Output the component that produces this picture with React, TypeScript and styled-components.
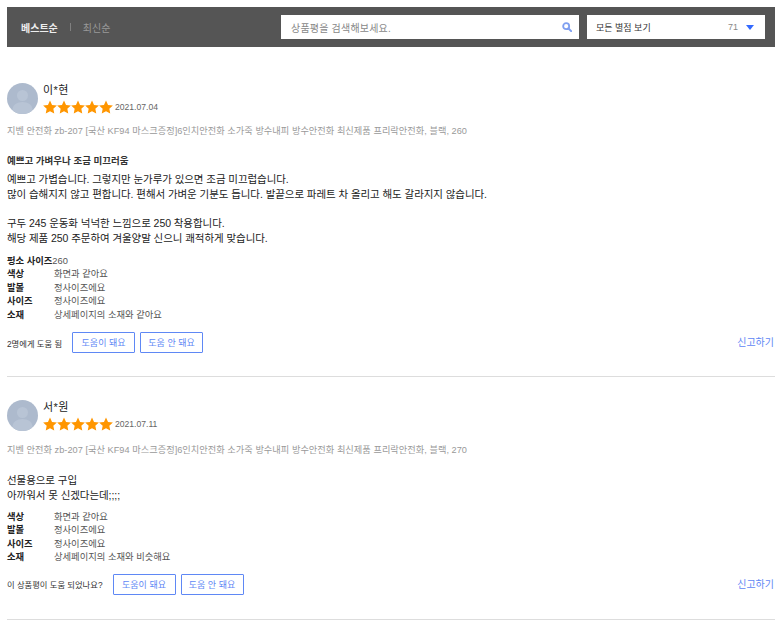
import * as React from "react";
import styled, { createGlobalStyle } from "styled-components";

const FONT = `"Liberation Sans", "Noto Sans CJK KR", sans-serif`;

type Attr = { label: string; value: string };

type Review = {
  name: string;
  date: string;
  product: string;
  title?: string;
  body: string[];
  size?: string;
  attrs: Attr[];
  helpful: string;
};

const PRODUCT = "지벤 안전화 zb-207 [국산 KF94 마스크증정]6인치안전화 소가죽 방수내피 방수안전화 최신제품 프리락안전화, 블랙, ";

const reviews: Review[] = [
  {
    name: "이*현",
    date: "2021.07.04",
    product: PRODUCT + "260",
    title: "예쁘고 가벼우나 조금 미끄러움",
    body: [
      "예쁘고 가볍습니다. 그렇지만 눈가루가 있으면 조금 미끄럽습니다.",
      "많이 습해지지 않고 편합니다. 편해서 가벼운 기분도 듭니다. 발끝으로 파레트 차 올리고 해도 갈라지지 않습니다.",
      "",
      "구두 245 운동화 넉넉한 느낌으로 250 착용합니다.",
      "해당 제품 250 주문하여 겨울양말 신으니 쾌적하게 맞습니다.",
    ],
    size: "260",
    attrs: [
      { label: "색상", value: "화면과 같아요" },
      { label: "발볼", value: "정사이즈에요" },
      { label: "사이즈", value: "정사이즈에요" },
      { label: "소재", value: "상세페이지의 소재와 같아요" },
    ],
    helpful: "2명에게 도움 됨",
  },
  {
    name: "서*원",
    date: "2021.07.11",
    product: PRODUCT + "270",
    body: ["선물용으로 구입", "아까워서 못 신겠다는데;;;;"],
    attrs: [
      { label: "색상", value: "화면과 같아요" },
      { label: "발볼", value: "정사이즈에요" },
      { label: "사이즈", value: "정사이즈에요" },
      { label: "소재", value: "상세페이지의 소재와 비슷해요" },
    ],
    helpful: "이 상품평이 도움 되었나요?",
  },
];

const Star: React.FC = () => (
  <svg width="14" height="14" viewBox="0 0 24 24">
    <path
      fill="#ff9600"
      d="M12 .8l3.5 7.6 8.3 1-6.1 5.7 1.6 8.2L12 19.2l-7.3 4.1 1.6-8.2L.2 9.4l8.3-1z"
    />
  </svg>
);

const ReviewItem: React.FC<{ review: Review }> = ({ review }) => (
  <ReviewBlock>
    <Author>
      <Avatar>
        <svg width="31" height="31" viewBox="0 0 31 31">
          <circle cx="15.5" cy="12.5" r="5.5" fill="#b8c4d5" />
          <ellipse cx="15.5" cy="26" rx="10" ry="7" fill="#b8c4d5" />
        </svg>
      </Avatar>
      <div>
        <Name>{review.name}</Name>
        <RatingRow>
          <Stars>
            {[0, 1, 2, 3, 4].map((i) => (
              <Star key={i} />
            ))}
          </Stars>
          <DateText>{review.date}</DateText>
        </RatingRow>
      </div>
    </Author>
    <Product $gap={review.title ? 12 : 14}>{review.product}</Product>
    <Content $gap={review.title ? 18 : 17}>
      {review.title && <Title>{review.title}</Title>}
      <Body>
        {review.body.map((line, i) => (
          <BodyLine key={i}>{line || "\u00a0"}</BodyLine>
        ))}
      </Body>
    </Content>
    <Attrs $gap={review.size ? 9 : 8}>
      {review.size && (
        <AttrRow>
          <SizeLabel>평소 사이즈</SizeLabel>
          <AttrValue>{review.size}</AttrValue>
        </AttrRow>
      )}
      {review.attrs.map((attr) => (
        <AttrRow key={attr.label}>
          <AttrLabel>{attr.label}</AttrLabel>
          <AttrValue>{attr.value}</AttrValue>
        </AttrRow>
      ))}
    </Attrs>
    <Actions $gap={review.size ? 10 : 9}>
      <HelpfulText>{review.helpful}</HelpfulText>
      <VoteButton>도움이 돼요</VoteButton>
      <VoteButton>도움 안 돼요</VoteButton>
      <Report>신고하기</Report>
    </Actions>
  </ReviewBlock>
);

export default function App() {
  return (
    <Page>
      <GlobalStyle />
      <Toolbar>
        <Sort>
          <SortItem $active>베스트순</SortItem>
          <SortDivider />
          <SortItem>최신순</SortItem>
        </Sort>
        <Search>
          <SearchText>상품평을 검색해보세요.</SearchText>
          <svg width="10" height="10" viewBox="0 0 12 12">
            <circle cx="5" cy="5" r="3.6" fill="none" stroke="#7f9ff0" strokeWidth="2.2" />
            <path d="M7.8 7.8L11 11" stroke="#7f9ff0" strokeWidth="2.4" strokeLinecap="round" />
          </svg>
        </Search>
        <Filter>
          <FilterText>모든 별점 보기</FilterText>
          <FilterCount>71</FilterCount>
          <Caret />
        </Filter>
      </Toolbar>
      {reviews.map((review) => (
        <ReviewItem key={review.name} review={review} />
      ))}
    </Page>
  );
}

const GlobalStyle = createGlobalStyle`
  html, body {
    margin: 0;
    padding: 0;
    background: #fff;
  }
  body {
    font-family: ${FONT};
    color: #222;
  }
`;

const Page = styled.div`
  width: 768px;
  height: 624px;
  padding: 7px 5px 0 7px;
  overflow: hidden;
`;

const Toolbar = styled.div`
  display: flex;
  align-items: center;
  height: 40px;
  padding: 0 10px 0 14px;
  background: #555;
  box-sizing: border-box;
`;

const Sort = styled.div`
  display: flex;
  align-items: center;
  width: 260px;
`;

const SortItem = styled.span<{ $active?: boolean }>`
  font-size: 10px;
  font-weight: ${(p) => (p.$active ? 700 : 400)};
  color: ${(p) => (p.$active ? "#eee" : "#999")};
`;

const SortDivider = styled.span`
  width: 1px;
  height: 8px;
  margin: 0 12px;
  background: #808080;
`;

const Search = styled.div`
  display: flex;
  align-items: center;
  justify-content: space-between;
  width: 298px;
  height: 24px;
  padding: 0 7px 0 10px;
  background: #fff;
  box-sizing: border-box;
`;

const SearchText = styled.span`
  font-size: 10px;
  letter-spacing: 0.2px;
  color: #888;
`;

const Filter = styled.div`
  display: flex;
  align-items: center;
  width: 178px;
  height: 24px;
  margin-left: 8px;
  padding: 0 11px 0 9px;
  background: #fff;
  box-sizing: border-box;
`;

const FilterText = styled.span`
  flex: 1;
  font-size: 9px;
  color: #333;
`;

const FilterCount = styled.span`
  font-size: 9px;
  color: #888;
`;

const Caret = styled.span`
  width: 0;
  height: 0;
  margin-left: 8px;
  border-left: 4px solid transparent;
  border-right: 4px solid transparent;
  border-top: 5px solid #346aff;
`;

const ReviewBlock = styled.section`
  padding-top: 36px;
  height: 330px;
  box-sizing: border-box;
  border-bottom: 1px solid #ddd;

  & + & {
    height: 243px;
    padding-top: 23px;
  }
`;

const Author = styled.div`
  display: flex;
  align-items: flex-start;
  gap: 5px;
`;

const Avatar = styled.div`
  width: 31px;
  height: 31px;
  border-radius: 50%;
  background: #adbacd;
  overflow: hidden;
`;

const Name = styled.div`
  font-size: 11px;
  line-height: 14px;
  letter-spacing: 0.4px;
  color: #222;
`;

const RatingRow = styled.div`
  display: flex;
  align-items: center;
  margin-top: 3px;
`;

const Stars = styled.div`
  display: flex;
  height: 14px;
`;

const DateText = styled.span`
  margin-left: 2px;
  font-size: 8.6px;
  color: #666;
`;

const Product = styled.div<{ $gap: number }>`
  margin-top: ${(p) => p.$gap}px;
  font-size: 9.2px;
  line-height: 11px;
  letter-spacing: 0.03px;
  color: #999;
  white-space: nowrap;
`;

const Content = styled.div<{ $gap: number }>`
  margin-top: ${(p) => p.$gap}px;
`;

const Title = styled.div`
  font-size: 9.5px;
  font-weight: 700;
  line-height: 12px;
  margin-bottom: 5px;
  color: #333;
`;

const Body = styled.div`
  font-size: 10.5px;
  line-height: 14.8px;
  letter-spacing: -0.07px;
  color: #222;
`;

const BodyLine = styled.div`
  white-space: nowrap;
`;

const Attrs = styled.div<{ $gap: number }>`
  margin-top: ${(p) => p.$gap}px;
`;

const AttrRow = styled.div`
  display: flex;
  font-size: 9.3px;
  line-height: 13.5px;
`;

const AttrLabel = styled.span`
  width: 47px;
  font-weight: 700;
  color: #222;
`;

const SizeLabel = styled.span`
  font-weight: 700;
  color: #222;
`;

const AttrValue = styled.span`
  color: #555;
`;

const Actions = styled.div<{ $gap: number }>`
  display: flex;
  align-items: center;
  gap: 5px;
  margin-top: ${(p) => p.$gap}px;
`;

const HelpfulText = styled.span`
  margin-right: 5px;
  font-size: 8.3px;
  color: #333;
`;

const VoteButton = styled.button`
  width: 63px;
  height: 21px;
  padding: 0;
  border: 1px solid #5f88f5;
  border-radius: 1px;
  background: #fff;
  font-family: ${FONT};
  font-size: 9px;
  color: #5f88f5;
`;

const Report = styled.span`
  margin-left: auto;
  margin-top: -2px;
  font-size: 10px;
  color: #5f88f5;
  padding-right: 1px;
`;
